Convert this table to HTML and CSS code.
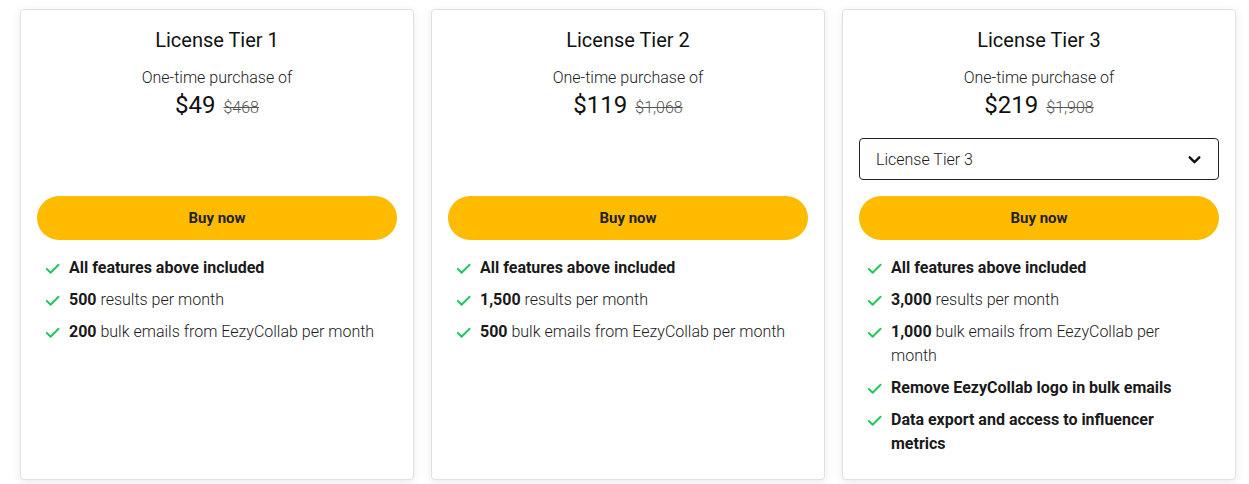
FILE: index.html
```html
<!DOCTYPE html>
<html lang="en">
<head>
  <meta charset="UTF-8" />
  <title>License Tiers</title>
  <link rel="stylesheet" href="styles.css">
</head>
<body>
  <div class="tiers">
    <div class="tier-card">
      <h2>License Tier 1</h2>
      <p class="purchase">One-time purchase of</p>
      <div class="price"><span class="now">$49</span><span class="was">$468</span></div>
      <div class="select-slot"></div>
      <button class="buy-btn">Buy now</button>
      <ul class="features">
        <li><svg viewBox="0 0 16 16"><path d="M2 8.5l4 4L14.5 4"/></svg><span><b>All features above included</b></span></li>
        <li><svg viewBox="0 0 16 16"><path d="M2 8.5l4 4L14.5 4"/></svg><span><b>500</b> results per month</span></li>
        <li><svg viewBox="0 0 16 16"><path d="M2 8.5l4 4L14.5 4"/></svg><span><b>200</b> bulk emails from EezyCollab per month</span></li>
      </ul>
    </div>

    <div class="tier-card">
      <h2>License Tier 2</h2>
      <p class="purchase">One-time purchase of</p>
      <div class="price"><span class="now">$119</span><span class="was">$1,068</span></div>
      <div class="select-slot"></div>
      <button class="buy-btn">Buy now</button>
      <ul class="features">
        <li><svg viewBox="0 0 16 16"><path d="M2 8.5l4 4L14.5 4"/></svg><span><b>All features above included</b></span></li>
        <li><svg viewBox="0 0 16 16"><path d="M2 8.5l4 4L14.5 4"/></svg><span><b>1,500</b> results per month</span></li>
        <li><svg viewBox="0 0 16 16"><path d="M2 8.5l4 4L14.5 4"/></svg><span><b>500</b> bulk emails from EezyCollab per month</span></li>
      </ul>
    </div>

    <div class="tier-card">
      <h2>License Tier 3</h2>
      <p class="purchase">One-time purchase of</p>
      <div class="price"><span class="now">$219</span><span class="was">$1,908</span></div>
      <div class="select-slot">
        <div class="tier-select">
          <span>License Tier 3</span>
          <svg viewBox="0 0 14 14"><path d="M2.5 5l4.5 4.5L11.5 5"/></svg>
        </div>
      </div>
      <button class="buy-btn">Buy now</button>
      <ul class="features">
        <li><svg viewBox="0 0 16 16"><path d="M2 8.5l4 4L14.5 4"/></svg><span><b>All features above included</b></span></li>
        <li><svg viewBox="0 0 16 16"><path d="M2 8.5l4 4L14.5 4"/></svg><span><b>3,000</b> results per month</span></li>
        <li><svg viewBox="0 0 16 16"><path d="M2 8.5l4 4L14.5 4"/></svg><span><b>1,000</b> bulk emails from EezyCollab per month</span></li>
        <li><svg viewBox="0 0 16 16"><path d="M2 8.5l4 4L14.5 4"/></svg><span><b>Remove EezyCollab logo in bulk emails</b></span></li>
        <li><svg viewBox="0 0 16 16"><path d="M2 8.5l4 4L14.5 4"/></svg><span><b>Data export and access to influencer metrics</b></span></li>
      </ul>
    </div>
  </div>
</body>
</html>
```

FILE: styles.css
```css
* {
  box-sizing: border-box;
}
body {
  margin: 0;
  background: #fff;
  color: #1a1a1a;
  font-family: Roboto, 'Liberation Sans', Arial, sans-serif;
}
.tiers {
  height: 100vh;
  padding: 9px 13px 4px 20px;
  display: grid;
  grid-template-columns: repeat(3, 1fr);
  gap: 17px;
}
.tier-card {
  background: #fff;
  border: 1px solid #e1e1e4;
  border-radius: 4px;
  box-shadow: 0 2px 10px rgba(0,0,0,0.09);
  padding: 16px 16px 0 16px;
  display: flex;
  flex-direction: column;
  text-align: center;
}
.tier-card h2 {
  margin: 0;
  font-size: 20px;
  font-weight: 400;
  line-height: 28px;
  color: #111;
}
.purchase {
  margin: 12px 0 0 0;
  font-size: 16px;
  font-weight: 300;
  line-height: 24px;
  color: #222;
}
.price {
  display: flex;
  justify-content: center;
  align-items: baseline;
  gap: 8px;
  line-height: 31px;
}
.price .now {
  font-size: 24px;
  color: #111;
}
.price .was {
  font-size: 16px;
  font-weight: 300;
  color: #555;
  text-decoration: line-through;
}
.select-slot {
  height: 42px;
  margin-top: 15px;
}
.tier-select {
  height: 42px;
  border: 1px solid #222;
  border-radius: 4px;
  display: flex;
  align-items: center;
  justify-content: space-between;
  padding: 0 16px;
  font-size: 16px;
  font-weight: 300;
  color: #1a1a1a;
  text-align: left;
}
.tier-select svg {
  width: 15px;
  height: 15px;
  fill: none;
  stroke: #111;
  stroke-width: 2.2;
  stroke-linecap: round;
  stroke-linejoin: round;
}
.buy-btn {
  margin-top: 16px;
  height: 44px;
  border: none;
  border-radius: 22px;
  background: #ffbb00;
  color: #222;
  font-family: inherit;
  font-size: 15px;
  font-weight: 700;
  cursor: pointer;
}
.features {
  list-style: none;
  margin: 16px 0 0 0;
  padding: 0 12px 0 8px;
  text-align: left;
  display: flex;
  flex-direction: column;
  gap: 8px;
}
.features li {
  display: flex;
  gap: 9px;
  font-size: 16px;
  font-weight: 300;
  line-height: 24px;
  color: #1a1a1a;
}
.features b {
  font-weight: 700;
}
.features svg {
  flex: none;
  width: 15px;
  height: 15px;
  margin-top: 5px;
  fill: none;
  stroke: #22c55e;
  stroke-width: 2;
  stroke-linecap: round;
  stroke-linejoin: round;
}
```
